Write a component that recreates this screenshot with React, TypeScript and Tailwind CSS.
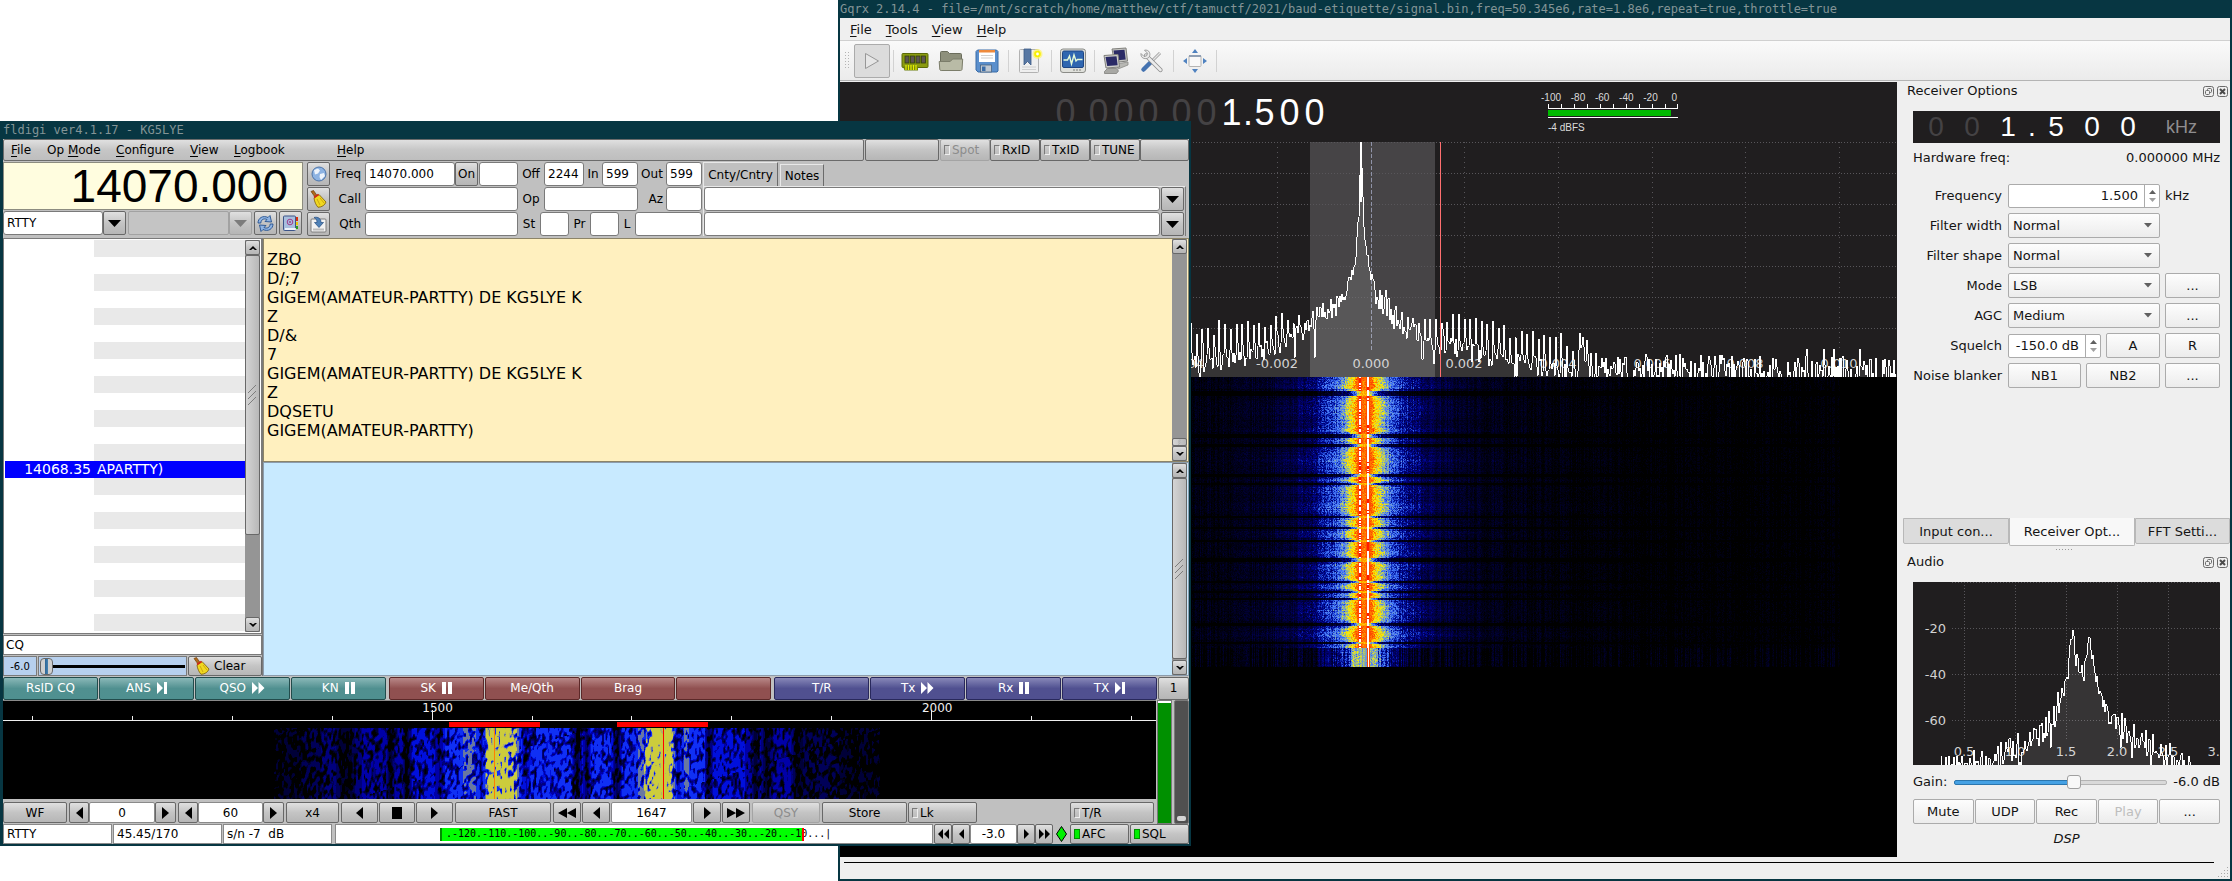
import React, { useMemo } from "react";

/* ------------------------------------------------------------------ */
/* Signal data                                                         */
/* ------------------------------------------------------------------ */

function makeRandom(seed: number) {
  let a = seed;
  return () => {
    a = (a + 0x6d2b79f5) | 0;
    let t = Math.imul(a ^ (a >>> 15), 1 | a);
    t = (t + Math.imul(t ^ (t >>> 7), 61 | t)) ^ t;
    return ((t ^ (t >>> 14)) >>> 0) / 4294967296;
  };
}

type Point = [number, number];

function interpolate(points: Point[], x: number): number {
  if (x <= points[0][0]) return points[0][1];
  for (let i = 1; i < points.length; i++) {
    if (x <= points[i][0]) {
      const [x0, y0] = points[i - 1];
      const [x1, y1] = points[i];
      return y0 + ((y1 - y0) * (x - x0)) / (x1 - x0);
    }
  }
  return points[points.length - 1][1];
}

function rasterize(
  x0: number,
  x1: number,
  y0: number,
  y1: number,
  colors: string[],
  pick: (x: number, y: number) => number,
) {
  const parts: string[][] = colors.map(() => []);
  for (let y = y0; y < y1; y++) {
    let start = x0;
    let current = pick(x0, y);
    for (let x = x0 + 1; x <= x1; x++) {
      const next = x < x1 ? pick(x, y) : -1;
      if (next !== current) {
        if (current > 0) parts[current].push(`M${start} ${y}h${x - start}v1h${start - x}z`);
        start = x;
        current = next;
      }
    }
  }
  return parts.map((p) => p.join(""));
}

function Raster({ colors, paths }: { colors: string[]; paths: string[] }) {
  return (
    <g shapeRendering="crispEdges">
      {paths.map((d, i) => (d ? <path key={i} d={d} fill={colors[i]} /> : null))}
    </g>
  );
}

/* ------------------------------------------------------------------ */
/* Gqrx: spectrum and waterfall                                        */
/* ------------------------------------------------------------------ */

const PEAKS: Point[] = [
  [340, 178], [405, 176], [440, 168], [465, 172], [480, 158], [495, 154], [505, 142], [513, 118],
  [516, 96], [519, 50], [521, 0], [523, 60], [525, 100], [529, 108], [533, 136], [540, 146], [545, 150],
  [552, 158], [560, 168], [580, 172], [600, 168], [625, 164], [650, 172], [680, 186], [710, 186],
  [732, 192], [746, 208], [770, 218], [800, 214], [1057, 218],
];
const TROUGHS: Point[] = [
  [340, 226], [405, 218], [440, 204], [465, 190], [485, 180], [498, 172], [508, 156], [515, 132],
  [519, 96], [521, 0], [524, 84], [528, 130], [535, 158], [548, 178], [560, 186], [580, 196], [600, 204],
  [640, 216], [680, 222], [720, 232], [760, 240], [1057, 246],
];

function spectrumPath() {
  const rnd = makeRandom(42);
  const out: string[] = [];
  for (let x = 330; x < 1057; x++) {
    const hi = interpolate(PEAKS, x);
    const lo = interpolate(TROUGHS, x);
    const inComb = x < 470 || (x > 555 && x < 740);
    let y: number;
    if (inComb) {
      const phase = (x + 3) % 5.7;
      if (phase < 1) y = hi + rnd() * 16;
      else if (phase < 2) y = (hi + lo) / 2 + rnd() * 14;
      else y = lo + (rnd() - 0.6) * 20;
      if (rnd() < 0.02) y = lo + 20;
    } else if (x > 505 && x < 535) {
      y = (hi + lo) / 2 + (rnd() - 0.5) * 14;
    } else if (x > 735) {
      y = lo + (hi - lo) * Math.pow(rnd(), 1.3) * 1.1;
      if (rnd() < 0.04) y = hi - 10;
    } else {
      y = lo + (hi - lo) * rnd() + (rnd() - 0.5) * 14;
    }
    if (x === 521) y = 0;
    if (x === 475) y = 216;
    out.push(`${x} ${Math.round(Math.min(235, Math.max(0, y)))}`);
  }
  return out.join("L");
}

const HOT = [
  "#000000", "#00000c", "#000016", "#000024", "#000034", "#000048", "#00005c", "#000074", "#00088c",
  "#0c20ac", "#2044cc", "#3868f0", "#5080f4", "#6c98d8", "#8cb09c", "#b4c86c", "#dce030", "#f8ec00",
  "#ffc800", "#ff9c00", "#ff7400", "#ff4c00", "#ff1c00", "#ffffff",
];

const LEVELS: Point[] = [
  [0, 20], [7, 20.5], [9, 19], [11, 17.5], [15, 16.5], [19, 14], [23, 12], [30, 10.5], [38, 8.6], [52, 6.8],
  [70, 4.8], [95, 3], [130, 1.9], [190, 1.1], [260, 0.4], [330, 0],
];

const GAPS: [number, number][] = [
  [14, 18], [57, 60], [67, 69], [97, 99], [106, 107], [139, 140], [150, 151],
  [163, 164], [181, 184], [204, 205], [214, 215], [221, 222], [246, 248], [265, 266],
];

function gqrxWaterfall() {
  const rnd = makeRandom(7);
  const columns = Array.from({ length: 1057 }, () => rnd());
  const rows = Array.from({ length: 290 }, (_, y) => {
    const gap = GAPS.find(([a, b]) => y >= a && y <= b);
    const near = GAPS.find(([a, b]) => y >= a - 2 && y <= b + 2);
    const tail = y >= 271;
    const base = tail ? 0.55 : gap ? 0.42 : near ? 0.82 : 1 + 0.08 * Math.sin(y / 4);
    return {
      scale: base * (0.9 + rnd() * 0.2),
      gap: !!gap,
      tail,
      left: rnd() < 0.6,
      right: Math.sin(y / 6 + 2) > -0.3 || rnd() < 0.3,
    };
  });
  return rasterize(352, 1000, 0, 290, HOT, (x, y) => {
    const row = rows[y];
    if (row.tail && x === 528) return 23;
    if (row.tail && (x === 527 || x === 529)) return 21;
    if ((x === 519 || x === 520) && !row.tail && !row.gap) return row.left ? 23 : 22;
    if (x === 527 || x === 528) return row.right || row.gap ? 23 : 22;
    if ((x === 526 || x === 518 || x === 521 || x === 529) && !row.gap && !row.tail) return 21;
    const d = Math.abs(x - 524) / row.scale;
    let level = interpolate(LEVELS, d);
    if (row.tail) level = Math.min(level, 13.5) + (columns[x] - 0.5) * 3;
    if (row.gap) level -= 1.5;
    if (d > 18) level += (columns[x] - 0.5) * 2.4;
    level += (rnd() - 0.5) * (d < 8 ? 1.6 : d < 60 ? 4.2 : 2.4);
    return Math.max(0, Math.min(22, Math.round(level)));
  });
}

function SpectrumView() {
  const line = useMemo(spectrumPath, []);
  const paths = useMemo(gqrxWaterfall, []);
  const xs = [437, 531, 624, 718, 812, 905, 999];
  const labels = ["-0.002", "0.000", "0.002", "0.004", "0.006", "0.008", "0.010"];
  return (
    <svg viewBox="0 0 1057 525" preserveAspectRatio="none" className="block h-[525px] w-full" role="img" aria-label="Spectrum and waterfall">
      <rect width="1057" height="235" fill="#201e1f" />
      <rect x="470" y="0" width="125" height="235" fill="#464446" />
      <g stroke="#58565a" strokeWidth="1" strokeDasharray="1 2" shapeRendering="crispEdges">
        {[0, 31, 62, 93, 124, 155, 186].map((y) => (
          <line key={y} x1="350" x2="1057" y1={y + 0.5} y2={y + 0.5} />
        ))}
        {xs.map((x) => (
          <line key={x} x1={x + 0.5} x2={x + 0.5} y1="0" y2="209" strokeDasharray="1 4" />
        ))}
      </g>
      <line x1="531.5" x2="531.5" y1="0" y2="209" stroke="#8f93a8" strokeDasharray="4 2" shapeRendering="crispEdges" />
      <g fill="#cfcfcf" fontSize="13" textAnchor="middle" fontFamily="DejaVu Sans">
        <text x="343" y="226">-0.004</text>
        {xs.map((x, i) => (
          <text key={x} x={x} y="226">
            {labels[i]}
          </text>
        ))}
      </g>
      <path d={`M330 235L${line}L1057 235z`} fill="#ffffff" fillOpacity="0.1" />
      <path d={`M${line}`} fill="none" stroke="#ffffff" strokeWidth="1" strokeLinejoin="bevel" shapeRendering="crispEdges" />
      <line x1="521" x2="521" y1="0" y2="60" stroke="#ffffff" strokeWidth="2" />
      <line x1="600.5" x2="600.5" y1="0" y2="235" stroke="#ff6f6f" strokeWidth="1" shapeRendering="crispEdges" />
      <rect y="235" width="1057" height="290" fill="#000000" />
      <g transform="translate(0 235)">
        <Raster colors={HOT} paths={paths} />
      </g>
    </svg>
  );
}

const AUDIO: Point[] = [
  [25, 184], [55, 180], [80, 173], [95, 166], [110, 159], [122, 148], [132, 140], [140, 136], [143, 120],
  [147, 113], [152, 100], [155, 84], [158, 54], [160, 52], [162, 66], [165, 82], [169, 90], [172, 84], [175, 58],
  [178, 55], [180, 74], [183, 96], [188, 110], [193, 124], [200, 132], [208, 140], [220, 147], [235, 158],
  [250, 168], [265, 176], [285, 184],
];

function AudioPlot() {
  const line = useMemo(() => {
    const rnd = makeRandom(19);
    const out: string[] = [];
    for (let x = 28; x < 284; x++) {
      const center = Math.abs(x - 168) < 20;
      const base = interpolate(AUDIO, x);
      const y = base + (x % 4 < 2 ? -3 : 6) + (rnd() - 0.35) * (center ? 12 : 22) + (rnd() < 0.05 && !center ? 16 : 0);
      out.push(`${x} ${Math.round(Math.min(183, y))}`);
    }
    return out.join("L");
  }, []);
  return (
    <svg viewBox="0 0 307 183" preserveAspectRatio="none" className="block h-[183px] w-full bg-[#201e1f]" role="img" aria-label="Audio spectrum">
      <g stroke="#58565a" strokeDasharray="1 2" shapeRendering="crispEdges">
        {[0.5, 46.5, 92.5, 138.5].map((y) => (
          <line key={y} x1="39" x2="307" y1={y} y2={y} />
        ))}
        {[51.5, 102.5, 153.5, 204.5, 255.5].map((x) => (
          <line key={x} x1={x} x2={x} y1="0" y2="158" />
        ))}
      </g>
      <g fill="#d2d2d2" fontSize="13" fontFamily="DejaVu Sans">
        <text x="33" y="51" textAnchor="end">-20</text>
        <text x="33" y="97" textAnchor="end">-40</text>
        <text x="33" y="143" textAnchor="end">-60</text>
        <text x="51" y="174" textAnchor="middle">0.5</text>
        <text x="102" y="174" textAnchor="middle">1.0</text>
        <text x="153" y="174" textAnchor="middle">1.5</text>
        <text x="204" y="174" textAnchor="middle">2.0</text>
        <text x="255" y="174" textAnchor="middle">2.5</text>
        <text x="307" y="174" textAnchor="end">3.</text>
      </g>
      <path d={`M28 183L${line}L284 183z`} fill="#ffffff" fillOpacity="0.1" />
      <path d={`M${line}`} fill="none" stroke="#ffffff" strokeWidth="1" strokeLinejoin="bevel" shapeRendering="crispEdges" />
    </svg>
  );
}

/* ------------------------------------------------------------------ */
/* Fldigi waterfall                                                    */
/* ------------------------------------------------------------------ */

const DIGI = ["#000000", "#00001c", "#000038", "#000058", "#00007c", "#0000a8", "#0010dc", "#1030f4", "#6a78a0", "#b0b068", "#cccc3c"];

const DIGI_PROFILE: Point[] = [
  [225, 0], [270, 0.02], [278, 0.14], [295, 0.14], [300, 0.22], [312, 0.22], [320, 0.34], [332, 0.32], [338, 0.14],
  [347, 0.14], [354, 0.4], [368, 0.46], [383, 0.44], [387, 0.1], [393, 0.5], [399, 0.46], [403, 0.08], [409, 0.54],
  [430, 0.56], [436, 0.4], [442, 0.6], [450, 0.66], [460, 0.72], [468, 0.76], [475, 0.7], [478, 0.5], [482, 0.78], [486, 1.1],
  [502, 1.02], [508, 0.9], [513, 0.84], [516, 0.66], [523, 0.5], [530, 0.68], [550, 0.68], [568, 0.62], [574, 0.2],
  [580, 0.54], [584, 0.3], [590, 0.68], [608, 0.66], [615, 0.22], [620, 0.64], [634, 0.7], [640, 0.8], [646, 0.88],
  [652, 1.04], [668, 1.14], [671, 0.8], [675, 0.54], [682, 0.74], [695, 0.68], [702, 0.62], [706, 0.2], [711, 0.54],
  [730, 0.56], [748, 0.5], [753, 0.12], [758, 0.46], [764, 0.12], [772, 0.48], [788, 0.46], [794, 0.1], [806, 0.28],
  [830, 0.24], [845, 0.14], [870, 0.1], [880, 0],
];

function digiWaterfall() {
  const rnd = makeRandom(91);
  const cols = 480;
  const rows = 24;
  const grid = Array.from({ length: rows }, () => Array.from({ length: cols }, () => rnd()));
  const smooth = (x: number, y: number) => {
    const gx = x / 1.9;
    const gy = ((y + x * 0.3) % 88) / 3.8;
    const ix = Math.floor(gx);
    const iy = Math.floor(gy);
    const fx = gx - ix;
    const fy = gy - iy;
    const a = grid[iy % rows][ix % cols] * (1 - fx) + grid[iy % rows][(ix + 1) % cols] * fx;
    const b = grid[(iy + 1) % rows][ix % cols] * (1 - fx) + grid[(iy + 1) % rows][(ix + 1) % cols] * fx;
    return a * (1 - fy) + b * fy;
  };
  return rasterize(225, 885, 0, 71, DIGI, (x, y) => {
    const p = interpolate(DIGI_PROFILE, x);
    const n = smooth(x, y);
    const v = p * 12 + (n - 0.5) * 12 - 1.6;
    const cap = p < 0.2 ? 2 : p < 0.3 ? 3 : p < 0.42 ? 4 : p < 0.52 ? 5 : p < 0.6 ? 6 : p < 0.72 ? 7 : p < 0.82 ? 8 : 10;
    if (p < 0.03) return 0;
    return Math.max(0, Math.min(cap, Math.round(v)));
  });
}

function DigiWaterfall() {
  const paths = useMemo(digiWaterfall, []);
  const ticks = [29, 129, 229, 329, 429, 529, 629, 729, 829, 929, 1029, 1129];
  return (
    <svg viewBox="0 0 1154 98" preserveAspectRatio="none" className="block h-[98px] w-full bg-black" role="img" aria-label="Waterfall">
      <g shapeRendering="crispEdges">
        <rect y="19" width="1154" height="1" fill="#f0f0f0" />
        {ticks.map((x) => (
          <rect key={x} x={x} y={x === 429 || x === 929 ? 9 : 15} width="1" height={x === 429 || x === 929 ? 10 : 4} fill="#f0f0f0" />
        ))}
      </g>
      <g fill="#f2f2f2" fontSize="12" textAnchor="middle" fontFamily="DejaVu Sans">
        <text x="435" y="11">1500</text>
        <text x="935" y="11">2000</text>
      </g>
      <g transform="translate(0 27)">
        <Raster colors={DIGI} paths={paths} />
      </g>
      <g shapeRendering="crispEdges" fill="#ff0000">
        <rect x="446" y="21" width="91" height="5" />
        <rect x="615" y="21" width="91" height="5" />
        <rect x="661" y="27" width="1" height="71" />
        <rect x="491" y="27" width="1" height="71" fill="#ff8000" />
      </g>
    </svg>
  );
}

/* ------------------------------------------------------------------ */
/* Gqrx window                                                         */
/* ------------------------------------------------------------------ */

function MenuItem({ label, hot = 0 }: { label: string; hot?: number }) {
  return (
    <button type="button" className="leading-none whitespace-pre">
      {label.slice(0, hot)}
      <u className="underline-offset-2">{label[hot]}</u>
      {label.slice(hot + 1)}
    </button>
  );
}

const toolButton = "flex h-9 w-9 items-center justify-center";

function ToolSeparator() {
  return <span className="mx-[3px] h-[22px] w-px bg-[#d2d2d2]" />;
}

function Toolbar() {
  return (
    <div className="flex h-[41px] items-center border-y border-t-[#d0d0d0] border-b-[#b4b4b4] bg-linear-to-b from-[#fafafa] to-[#ebebeb] pl-1">
      <svg width="10" height="18" viewBox="0 0 10 18" aria-hidden="true">
        <g fill="#b4b4b4">
          {[0, 3, 6, 9, 12, 15].map((y) => (
            <g key={y}>
              <rect x="1" y={y} width="1" height="1" />
              <rect x="4" y={y} width="1" height="1" />
            </g>
          ))}
        </g>
      </svg>
      <button type="button" aria-label="Start DSP" className="flex h-[34px] w-9 items-center justify-center rounded-[2px] border border-[#ababab] bg-[#dcdcdc]">
        <svg width="16" height="18" viewBox="0 0 16 18">
          <path d="M1.5 1.5v15L14.5 9z" fill="#e6e6e6" stroke="#979797" />
        </svg>
      </button>
      <ToolSeparator />
      <button type="button" aria-label="Configure I/O devices" className={toolButton}>
        <svg width="28" height="24" viewBox="0 0 28 24">
          <rect x="1" y="4.500" width="26" height="14" rx="1" fill="#8a9a10" stroke="#5a6a08" />
          <path d="M2 17.500h15v4H3.500z" fill="#6f8010" />
          <path d="M5 16v5M7.500 16v5M10 16v5M12.500 16v5M15 16v5" stroke="#e8f000" strokeWidth="1.200" />
          <g fill="#5d5550" stroke="#34400a" strokeWidth="0.800">
            <rect x="4" y="7" width="4" height="7" />
            <rect x="9.500" y="7" width="4" height="7" />
            <rect x="15" y="7" width="4" height="7" />
            <rect x="20.500" y="7" width="4" height="7" />
          </g>
        </svg>
      </button>
      <button type="button" aria-label="Load settings" className={toolButton}>
        <svg width="26" height="24" viewBox="0 0 26 24">
          <path d="M2.500 21V3.500a1 1 0 0 1 1-1h6l2 2h11a1 1 0 0 1 1 1V18z" fill="#8e907c" stroke="#6b6d5c" />
          <path d="M1.200 12.500h11l2.500-2.500h10l-.7 10.500a1.500 1.500 0 0 1-1.500 1H3.300a1.500 1.500 0 0 1-1.500-1z" fill="#b9bba6" stroke="#7b7d6a" />
        </svg>
      </button>
      <button type="button" aria-label="Save settings" className={toolButton}>
        <svg width="24" height="24" viewBox="0 0 24 24">
          <path d="M2.500 1h19l1.500 1.500V22l-1 1H3l-2-2V2.500z" fill="#5b8fcc" stroke="#3a6ca8" />
          <rect x="4" y="1" width="16" height="12" fill="#ffffff" />
          <rect x="4" y="1" width="16" height="2.500" fill="#ee8a3c" />
          <path d="M6 6.500h12M6 9h12" stroke="#cfcfcf" />
          <rect x="5.500" y="16" width="11" height="7" fill="#bfc8d2" stroke="#47627f" strokeWidth="0.800" />
          <rect x="7" y="17.500" width="3.500" height="4.500" fill="#3a6ca8" />
        </svg>
      </button>
      <ToolSeparator />
      <button type="button" aria-label="Add bookmark" className={toolButton}>
        <svg width="26" height="26" viewBox="0 0 26 26">
          <rect x="2.500" y="1.500" width="19" height="23" rx="1" fill="#efefef" stroke="#b2b2b2" />
          <path d="M5 19h14M5 21.500h14" stroke="#d0d0d0" />
          <path d="M7 1h7v16l-3.500-3.500L7 17z" fill="#5878a4" stroke="#3d5a86" strokeWidth="0.800" />
          <circle cx="20.500" cy="6" r="5" fill="#fff46a" opacity="0.7" />
          <circle cx="20.500" cy="6" r="3.300" fill="#f7f000" />
          <circle cx="20.500" cy="6" r="1.400" fill="#ffffff" />
        </svg>
      </button>
      <ToolSeparator />
      <button type="button" aria-label="Spectrum display" className={toolButton}>
        <svg width="28" height="26" viewBox="0 0 28 26">
          <rect x="1.500" y="1" width="25" height="23.500" rx="2.500" fill="#dfe0db" stroke="#8b8c88" />
          <rect x="3.500" y="3" width="21" height="16.500" rx="1.500" fill="#2f66b0" stroke="#1e4684" />
          <path d="M4.500 12h4l2-4 2 8 2.500-9 2 6 1.500-1.500h5" fill="none" stroke="#e6fbd8" strokeWidth="1.400" />
          <path d="M14 22h9" stroke="#a0a09c" strokeWidth="1.500" strokeDasharray="2 1" />
        </svg>
      </button>
      <ToolSeparator />
      <button type="button" aria-label="Remote control" className={toolButton}>
        <svg width="28" height="28" viewBox="0 0 28 28">
          <path d="M10 2l14-1 1.500 13-13 1.500z" fill="#c4c4c0" stroke="#80807c" />
          <path d="M11.500 3.500l11-.8 1.200 9.800-10.500 1z" fill="#2a2a66" />
          <path d="M14 17l12-2v3l-10 4z" fill="#b8b8b4" stroke="#8a8a86" strokeWidth="0.800" />
          <path d="M2 8.500l14-1 1.500 12.500-13.500 1z" fill="#d2d2ce" stroke="#80807c" />
          <path d="M3.500 10l11-.8 1.200 9-10.500.8z" fill="#2a2a66" />
          <path d="M2.500 24.500l3-3h9l2 2.500-2 2.500h-12z" fill="#a8a8a4" stroke="#80807c" strokeWidth="0.800" />
        </svg>
      </button>
      <button type="button" aria-label="Remote settings" className={toolButton}>
        <svg width="24" height="24" viewBox="0 0 24 24">
          <path d="M3 21L20 4" stroke="#9c9c9c" strokeWidth="3" />
          <path d="M3 21L20 4" stroke="#e4e4e4" strokeWidth="1.400" />
          <path d="M3.500 20.500l8-8" stroke="#4472b0" strokeWidth="4.500" strokeLinecap="round" />
          <path d="M6 6.500L20.500 21" stroke="#8c8c8c" strokeWidth="4.200" strokeLinecap="round" />
          <path d="M6 6.500L20.500 21" stroke="#ececec" strokeWidth="2.600" strokeLinecap="round" />
          <path d="M4.500 1.200l3 3-.8 2.600-2.700.7-3-3C.6 8 3 10 6.500 9.500 9.500 9 10.500 6 9.500 3.500 8.700 1.500 6.500.7 4.500 1.200z" fill="#ececec" stroke="#8c8c8c" strokeWidth="0.800" />
        </svg>
      </button>
      <ToolSeparator />
      <button type="button" aria-label="Full screen" className={toolButton}>
        <svg width="26" height="26" viewBox="0 0 26 26">
          <rect x="7" y="7.500" width="12" height="11" rx="1" fill="#f8f8f8" stroke="#b4b4b4" />
          <rect x="7" y="7" width="12" height="2" fill="#8f9fb4" />
          <path d="M13 1l3 4h-6zM13 25l3-4h-6zM1 13l4-3v6zM25 13l-4-3v6z" fill="#4f82c0" />
        </svg>
      </button>
      <ToolSeparator />
    </div>
  );
}

function SignalMeter() {
  return (
    <div className="w-[150px] font-['Liberation_Sans',sans-serif] text-[10px] leading-none text-[#dcdcdc]">
      <div className="flex justify-between pr-[14px]">
        <span>-100</span>
        <span>-80</span>
        <span>-60</span>
        <span>-40</span>
        <span>-20</span>
        <span className="pl-1">0</span>
      </div>
      <svg width="140" height="16" viewBox="0 0 140 16" className="block" role="img" aria-label="Signal level">
        <g shapeRendering="crispEdges">
          {[7, 20, 33, 46, 59, 72, 85, 98, 111, 124, 136].map((x) => (
            <rect key={x} x={x} y="1" width="1" height="5" fill="#fff" />
          ))}
          <rect x="7" y="5" width="130" height="1" fill="#fff" />
          <rect x="7" y="7" width="123" height="6" fill="#00bb00" />
          <rect x="7" y="14" width="130" height="1" fill="#fff" />
        </g>
      </svg>
      <div className="mt-1 pl-[7px]">-4 dBFS</div>
    </div>
  );
}

function FrequencyHeader() {
  const digits: [string, string][] = [
    ["0", "w-[25px] text-[#444244]"],
    [" ", "w-2"],
    ["0", "w-[25px] text-[#444244]"],
    ["0", "w-[25px] text-[#444244]"],
    ["0", "w-[25px] text-[#444244]"],
    [" ", "w-2"],
    ["0", "w-[25px] text-[#444244]"],
    ["0", "w-[25px] text-[#444244]"],
    ["1", "w-[25px] text-white"],
    [".", "w-2 text-white"],
    ["5", "w-[25px] text-white"],
    ["0", "w-[25px] text-white"],
    ["0", "w-[25px] text-white"],
  ];
  return (
    <div className="flex h-[60px] items-center bg-[#201e1f] pt-0.5">
      <div className="ml-[213px] flex font-['Liberation_Sans',sans-serif] text-4xl leading-none">
        {digits.map(([d, cls], i) => (
          <span key={i} className={`flex justify-center ${cls}`}>
            {d}
          </span>
        ))}
      </div>
      <div className="ml-[214px]">
        <SignalMeter />
      </div>
    </div>
  );
}

function DockTitle({ title }: { title: string }) {
  return (
    <div className="flex items-center justify-between pr-0.5 pl-[10px] leading-[18px]">
      <h2>{title}</h2>
      <div className="flex gap-[3px]">
        <button type="button" aria-label={`Float ${title}`} className="h-[11px] w-[11px]">
          <svg width="11" height="11" viewBox="0 0 11 11" fill="none" stroke="#6a6a6a">
            <rect x="0.500" y="0.500" width="10" height="10" rx="2" />
            <rect x="4.500" y="2.500" width="4" height="4" rx="1" />
            <rect x="2.500" y="4.500" width="4" height="4" rx="1" fill="#efefef" />
          </svg>
        </button>
        <button type="button" aria-label={`Close ${title}`} className="h-[11px] w-[11px]">
          <svg width="11" height="11" viewBox="0 0 11 11" fill="none" stroke="#6a6a6a">
            <rect x="0.500" y="0.500" width="10" height="10" rx="2" />
            <path d="M3 3l5 5M8 3l-5 5" stroke="#4a4a4a" strokeWidth="2" />
          </svg>
        </button>
      </div>
    </div>
  );
}

const qtButton =
  "h-[25px] rounded-[2px] border border-[#ababab] bg-linear-to-b from-[#fdfdfd] to-[#ececec] text-center leading-none";

function QtSelect({ id, options }: { id: string; options: string[] }) {
  return (
    <div className="relative w-[152px]">
      <select id={id} className="h-[25px] w-full appearance-none rounded-[2px] border border-[#ababab] bg-linear-to-b from-[#fdfdfd] to-[#ececec] pl-1 leading-none">
        {options.map((o) => (
          <option key={o}>{o}</option>
        ))}
      </select>
      <svg width="8" height="5" viewBox="0 0 8 5" className="pointer-events-none absolute top-[10px] right-2" aria-hidden="true">
        <path d="M0 0h8L4 4.500z" fill="#606060" />
      </svg>
    </div>
  );
}

function SpinButtons() {
  return (
    <span className="flex w-[15px] flex-col items-center justify-center gap-1 border-l border-[#ababab]">
      <svg width="7" height="4" viewBox="0 0 7 4" aria-hidden="true">
        <path d="M0 4h7L3.500 0z" fill="#606060" />
      </svg>
      <svg width="7" height="4" viewBox="0 0 7 4" aria-hidden="true">
        <path d="M0 0h7L3.500 4z" fill="#a0a0a0" />
      </svg>
    </span>
  );
}

function FormRow({ label, htmlFor, children }: { label: string; htmlFor: string; children: React.ReactNode }) {
  return (
    <div className="flex h-[25px] items-center">
      <label htmlFor={htmlFor} className="w-[90px] pr-px text-right">
        {label}
      </label>
      <div className="ml-[5px] flex flex-1 items-center gap-[5px]">{children}</div>
    </div>
  );
}

function ReceiverOptions() {
  return (
    <section className="flex h-[436px] flex-col">
      <DockTitle title="Receiver Options" />
      <div className="mx-[10px] ml-4 pt-[11px]">
        <div className="flex h-8 items-center bg-[#201e1f] pl-[5px] font-['Liberation_Sans',sans-serif] text-[28px] leading-none text-white">
          <span className="w-9 text-center text-[#444244]">0</span>
          <span className="w-9 text-center text-[#444244]">0</span>
          <span className="w-9 text-center">1</span>
          <span className="w-3 text-center">.</span>
          <span className="w-9 text-center">5</span>
          <span className="w-9 text-center">0</span>
          <span className="w-9 text-center">0</span>
          <span className="ml-5 text-lg leading-none text-[#8f8d8f]">kHz</span>
        </div>
        <div className="mt-[6px] flex justify-between leading-[18px]">
          <span>Hardware freq:</span>
          <span>0.000000 MHz</span>
        </div>
        <div className="mt-4 flex flex-col gap-[5px]">
          <FormRow label="Frequency" htmlFor="rx-frequency">
            <div className="flex h-6 w-[152px] rounded-[2px] border border-[#ababab] bg-white">
              <input id="rx-frequency" defaultValue="1.500" className="w-0 flex-1 pr-[6px] text-right outline-none" />
              <SpinButtons />
            </div>
            <span>kHz</span>
          </FormRow>
          <FormRow label="Filter width" htmlFor="rx-width">
            <QtSelect id="rx-width" options={["Normal"]} />
          </FormRow>
          <FormRow label="Filter shape" htmlFor="rx-shape">
            <QtSelect id="rx-shape" options={["Normal"]} />
          </FormRow>
          <FormRow label="Mode" htmlFor="rx-mode">
            <QtSelect id="rx-mode" options={["LSB"]} />
            <button type="button" aria-label="Mode options" className={`${qtButton} flex-1`}>...</button>
          </FormRow>
          <FormRow label="AGC" htmlFor="rx-agc">
            <QtSelect id="rx-agc" options={["Medium"]} />
            <button type="button" aria-label="AGC options" className={`${qtButton} flex-1`}>...</button>
          </FormRow>
          <FormRow label="Squelch" htmlFor="rx-squelch">
            <div className="flex h-6 w-[93px] rounded-[2px] border border-[#ababab] bg-white">
              <input id="rx-squelch" defaultValue="-150.0 dB" className="w-0 flex-1 pr-[6px] text-right outline-none" />
              <SpinButtons />
            </div>
            <button type="button" className={`${qtButton} w-[54px]`}>A</button>
            <button type="button" className={`${qtButton} flex-1`}>R</button>
          </FormRow>
          <FormRow label="Noise blanker" htmlFor="rx-nb1">
            <button type="button" id="rx-nb1" className={`${qtButton} w-[73px]`}>NB1</button>
            <button type="button" className={`${qtButton} w-[74px]`}>NB2</button>
            <button type="button" aria-label="Noise blanker options" className={`${qtButton} flex-1`}>...</button>
          </FormRow>
        </div>
      </div>
    </section>
  );
}

function SidePanel() {
  return (
    <aside className="flex w-[333px] shrink-0 flex-col text-[13px] text-[#141414]">
      <ReceiverOptions />
      <div className="flex h-7 items-start pl-[6px]" role="tablist">
        <button type="button" role="tab" className="h-[26px] w-[106px] rounded-b-[2px] border border-[#b8b8b8] bg-[#dcdcdc] leading-none">Input con...</button>
        <button type="button" role="tab" aria-selected="true" className="h-7 w-[126px] rounded-b-[2px] border border-t-0 border-[#b8b8b8] bg-[#f8f8f8] leading-none">Receiver Opt...</button>
        <button type="button" role="tab" className="h-[26px] flex-1 rounded-b-[2px] border border-[#b8b8b8] bg-[#dcdcdc] leading-none">FFT Setti...</button>
      </div>
      <div className="flex h-[7px] items-center justify-center gap-0.5">
        {[0, 1, 2, 3, 4, 5].map((i) => (
          <span key={i} className="h-px w-px bg-[#9a9a9a]" />
        ))}
      </div>
      <section>
        <DockTitle title="Audio" />
        <div className="mr-[10px] ml-4 pt-[11px]">
          <AudioPlot />
          <div className="mt-[5px] flex h-6 items-center">
            <label htmlFor="gain" className="w-[41px]">Gain:</label>
            <div className="relative h-4 flex-1">
              <div className="flex h-full items-center">
                <div className="h-[5px] w-[56%] rounded-[2px] border border-[#2b76ae] bg-[#45a1e4]" />
                <div className="h-[5px] flex-1 rounded-[2px] border border-[#b4b4b4] bg-[#d9d9d9]" />
              </div>
              <input
                id="gain"
                type="range"
                min={-80}
                max={50}
                defaultValue={-6}
                className="absolute inset-0 h-4 w-full appearance-none bg-transparent [&::-webkit-slider-thumb]:h-[14px] [&::-webkit-slider-thumb]:w-[14px] [&::-webkit-slider-thumb]:appearance-none [&::-webkit-slider-thumb]:rounded-[3px] [&::-webkit-slider-thumb]:border [&::-webkit-slider-thumb]:border-[#a0a0a0] [&::-webkit-slider-thumb]:bg-[#f8f8f8]"
              />
            </div>
            <span className="ml-[6px]">-6.0 dB</span>
          </div>
          <div className="mt-[5px] flex gap-px">
            <button type="button" className={`${qtButton} flex-1`}>Mute</button>
            <button type="button" className={`${qtButton} flex-1`}>UDP</button>
            <button type="button" className={`${qtButton} flex-1`}>Rec</button>
            <button type="button" disabled className={`${qtButton} flex-1 text-[#bebebe]`}>Play</button>
            <button type="button" aria-label="Audio options" className={`${qtButton} flex-1`}>...</button>
          </div>
          <div className="mt-[6px] text-center leading-[18px] italic">DSP</div>
        </div>
      </section>
    </aside>
  );
}

function GqrxWindow() {
  return (
    <div className="absolute inset-y-0 right-0 left-[838px] flex flex-col border-r-2 border-b-2 border-l-2 border-[#073642] bg-[#efefef] font-['DejaVu_Sans',sans-serif]">
      <div className="h-[18px] overflow-hidden bg-[#073642] font-['DejaVu_Sans_Mono',monospace] text-xs leading-[18px] whitespace-nowrap text-[#839496]">
        Gqrx 2.14.4 - file=/mnt/scratch/home/matthew/ctf/tamuctf/2021/baud-etiquette/signal.bin,freq=50.345e6,rate=1.8e6,repeat=true,throttle=true
      </div>
      <nav className="flex h-[22px] items-center gap-[14px] pl-[10px] text-[13px] text-[#141414]">
        <MenuItem label="File" />
        <MenuItem label="Tools" />
        <MenuItem label="View" />
        <MenuItem label="Help" />
      </nav>
      <Toolbar />
      <div className="flex flex-1 pt-px">
        <main className="mb-[22px] flex min-w-0 flex-1 flex-col bg-black">
          <FrequencyHeader />
          <SpectrumView />
        </main>
        <SidePanel />
      </div>
      <div className="absolute right-4 bottom-4 left-1 h-px bg-black" />
      <svg width="11" height="11" viewBox="0 0 11 11" className="absolute right-px bottom-px" aria-hidden="true">
        <g fill="#a8a8a8">
          {[[9, 0], [6, 3], [9, 3], [3, 6], [6, 6], [9, 6], [0, 9], [3, 9], [6, 9], [9, 9]].map(([x, y]) => (
            <rect key={`${x}-${y}`} x={x} y={y} width="1" height="1" />
          ))}
        </g>
      </svg>
    </div>
  );
}

/* ------------------------------------------------------------------ */
/* Fldigi window                                                       */
/* ------------------------------------------------------------------ */

const flButton =
  "flex items-center justify-center rounded-[2px] border border-[#686868] bg-linear-to-b from-[#e0e0e0] via-[#c4c4c4] to-[#b6b6b6] leading-none";
const flInput = "h-6 min-w-0 rounded-[3px] border border-[#7a7a7a] bg-white px-[3px] leading-none outline-none";

function Broom() {
  return (
    <svg width="17" height="18" viewBox="0 0 17 18" aria-hidden="true">
      <path d="M1 1.500L3.500 0.500 7 5.500 5 7z" fill="#b06a1c" stroke="#6e3c08" strokeWidth="0.700" />
      <path d="M4 8l5-3.500 7 7.500c-1 3-4 5.200-8 5.300C6 15 4.500 12 4 8z" fill="#f0d820" stroke="#7c5c08" strokeWidth="0.800" />
      <path d="M4 7.500l4.500-3" stroke="#d02a14" strokeWidth="1.800" />
      <path d="M7 9l3 6M10 8l4 5" stroke="#c8a010" strokeWidth="0.900" />
    </svg>
  );
}

type GlyphName = "left" | "right" | "left2" | "right2" | "stop" | "down" | "skip" | "ffwd" | "pause" | "upSmall" | "downSmall";

function Glyph({ name }: { name: GlyphName }) {
  const shapes: Record<GlyphName, { w: number; h: number; d: string }> = {
    left: { w: 7, h: 12, d: "M7 0v12L0 6z" },
    right: { w: 7, h: 12, d: "M0 0v12l7-6z" },
    left2: { w: 18, h: 10, d: "M9 0v10L0 5zM18 0v10L9 5z" },
    right2: { w: 18, h: 10, d: "M0 0v10l9-5zM9 0v10l9-5z" },
    stop: { w: 10, h: 12, d: "M0 0h10v12H0z" },
    down: { w: 13, h: 7, d: "M0 0h13L6.500 7z" },
    skip: { w: 10, h: 12, d: "M0 0v12l6-6zM7 0h3v12H7z" },
    ffwd: { w: 13, h: 12, d: "M0 0v12l6-6zM6.500 0v12l6-6z" },
    pause: { w: 10, h: 12, d: "M0 0h4v12H0zM6 0h4v12H6z" },
    upSmall: { w: 8, h: 4, d: "M0 4l4-4 4 4H6L4 2.500 2 4z" },
    downSmall: { w: 8, h: 4, d: "M0 0l4 4 4-4H6L4 1.500 2 0z" },
  };
  const s = shapes[name];
  return (
    <svg width={s.w} height={s.h} viewBox={`0 0 ${s.w} ${s.h}`} fill="currentColor" aria-hidden="true">
      <path d={s.d} />
    </svg>
  );
}

function FlScrollbar({ label, before, thumb }: { label: string; before: string; thumb: string }) {
  return (
    <div className="flex w-[15px] shrink-0 flex-col bg-[#959595] text-black" role="group" aria-label={label}>
      <button type="button" aria-label="Scroll up" className={`${flButton} h-[15px] shrink-0`}>
        <Glyph name="upSmall" />
      </button>
      <div className={before} />
      <div className={`${thumb} flex items-center justify-center rounded-[2px] border border-[#686868] bg-linear-to-r from-[#d4d4d4] to-[#b8b8b8]`}>
        <svg width="9" height="20" viewBox="0 0 9 20" stroke="#7d7d7d" aria-hidden="true" className="max-h-full">
          <path d="M0 8l8-8M0 14l8-8M0 20l8-8" />
        </svg>
      </div>
      <div className="flex-1" />
      <button type="button" aria-label="Scroll down" className={`${flButton} h-[15px] shrink-0`}>
        <Glyph name="downSmall" />
      </button>
    </div>
  );
}

function Toggle({ label, on = false, disabled = false, className }: { label: string; on?: boolean; disabled?: boolean; className: string }) {
  return (
    <button type="button" aria-pressed={on} disabled={disabled} className={`${flButton} ${className} !justify-start gap-0.5 pl-[3px] ${disabled ? "border-[#a4a4a4] text-[#8c8c8c]" : ""}`}>
      <span className={`h-[10px] w-[6px] border ${on ? "border-[#009000] bg-[#00f000]" : "border-t-[#7a7a7a] border-r-[#eeeeee] border-b-[#eeeeee] border-l-[#7a7a7a]"}`} />
      {label}
    </button>
  );
}

function DigiMenu() {
  return (
    <nav className="flex h-[22px] text-xs">
      <div className="flex flex-1 items-center rounded-[2px] border border-[#6b6b6b] bg-linear-to-b from-[#e0e0e0] via-[#c6c6c6] to-[#bebebe] pl-[7px]">
        <div className="w-9"><MenuItem label="File" /></div>
        <div className="w-[69px]"><MenuItem label="Op Mode" hot={3} /></div>
        <div className="w-[74px]"><MenuItem label="Configure" /></div>
        <div className="w-11"><MenuItem label="View" /></div>
        <div className="w-[103px]"><MenuItem label="Logbook" /></div>
        <MenuItem label="Help" />
      </div>
      <span className={`${flButton} ml-px w-[74px]`} />
      <Toggle label="Spot" disabled className="ml-px w-[50px]" />
      <Toggle label="RxID" className="w-[50px]" />
      <Toggle label="TxID" className="w-[50px]" />
      <Toggle label="TUNE" className="w-[50px]" />
      <span className={`${flButton} w-[49px]`} />
    </nav>
  );
}

const iconButton = `${flButton} h-6 w-[23px] shrink-0`;

function LogPanel() {
  return (
    <div className="flex h-[77px] pt-px text-xs">
      <div className="flex w-[300px] shrink-0 flex-col">
        <output className="flex h-[48px] items-center justify-end border border-[#8c8c80] bg-[#fffddf] pr-[14px] font-['Liberation_Sans',sans-serif] text-[46px] leading-none">
          14070.000
        </output>
        <div className="flex pt-px">
          <input aria-label="Operating mode" defaultValue="RTTY" className={`${flInput} w-[100px] px-1`} />
          <button type="button" aria-label="Choose mode" className={iconButton}><Glyph name="down" /></button>
          <input aria-label="Bandwidth" disabled className="ml-0.5 h-6 w-[101px] rounded-[2px] border border-[#a2a2a2] bg-[#c4c4c4]" />
          <button type="button" disabled aria-label="Choose bandwidth" className={`${iconButton} border-[#a2a2a2] text-[#7c7c7c]`}><Glyph name="down" /></button>
          <button type="button" aria-label="Sync" className={`${iconButton} ml-0.5`}>
            <svg width="17" height="17" viewBox="0 0 17 17" fill="#8fb4e4" stroke="#24508e" strokeWidth="0.900">
              <path d="M1 8C1 3 6 0 11 2.500L13 .5l1.500 6.500-6.500-.5 2-2C7 3 4 4.500 3.800 8z" />
              <path d="M16 9c0 5-5 8-10 5.500L4 16.500 2.500 10l6.500.5-2 2c3 1.500 6 0 6.200-3.500z" />
            </svg>
          </button>
          <button type="button" aria-label="Logbook" className={`${iconButton} ml-0.5`}>
            <svg width="17" height="17" viewBox="0 0 17 17">
              <rect x="1.500" y="1" width="12" height="14.500" rx="1" fill="#a8bede" stroke="#3c5488" />
              <path d="M3 14h11" stroke="#fff" strokeWidth="1.600" />
              <circle cx="8" cy="7" r="2.800" fill="none" stroke="#a03c8c" />
              <circle cx="8" cy="7" r="1" fill="#a03c8c" />
              <path d="M15 2v4" stroke="#d83010" strokeWidth="2" />
              <path d="M15 7v3" stroke="#f0c800" strokeWidth="2" />
              <path d="M15 11v3" stroke="#30a020" strokeWidth="2" />
            </svg>
          </button>
        </div>
      </div>
      <div className="ml-1 flex shrink-0 flex-col gap-px">
        <button type="button" aria-label="Web lookup" className={iconButton}>
          <svg width="16" height="16" viewBox="0 0 16 16">
            <circle cx="8" cy="8" r="7" fill="#8db3e2" stroke="#4c74a8" />
            <path d="M3 4l4-1.500 2 2-2 3-3 1zM9 8l4-1 1 3-4 4-1.500-3z" fill="#eef4fb" />
          </svg>
        </button>
        <button type="button" aria-label="Clear log fields" className={iconButton}><Broom /></button>
        <button type="button" aria-label="Save contact" className={iconButton}>
          <svg width="17" height="17" viewBox="0 0 17 17">
            <rect x="1" y="3" width="15" height="13" rx="1" fill="#f2f2f2" stroke="#7c7c7c" />
            <path d="M3 13.500h11" stroke="#bcbcbc" strokeWidth="2" />
            <path d="M4 1.500c4-1 7 1 7 5h2.500L9 11.500 4.500 6.500H7c0-2.500-1-4-3-5z" fill="#4f82b8" stroke="#244c80" strokeWidth="0.700" />
          </svg>
        </button>
      </div>
      <div className="flex shrink-0 flex-col gap-px">
        <div className="flex items-center">
          <label htmlFor="freq" className="w-[35px] pr-1 text-right">Freq</label>
          <input id="freq" defaultValue="14070.000" className={`${flInput} w-[90px]`} />
          <button type="button" className={`${flButton} h-6 w-[23px]`}>On</button>
          <input aria-label="Time on" className={`${flInput} ml-px w-[39px]`} />
          <label htmlFor="off" className="w-[26px] text-center">Off</label>
          <input id="off" defaultValue="2244" className={`${flInput} w-10`} />
          <label htmlFor="in" className="w-[18px] text-center">In</label>
          <input id="in" defaultValue="599" className={`${flInput} w-9`} />
          <label htmlFor="out" className="w-7 text-center">Out</label>
          <input id="out" defaultValue="599" className={`${flInput} w-9`} />
        </div>
        <div className="flex items-center">
          <label htmlFor="call" className="w-[35px] pr-1 text-right">Call</label>
          <input id="call" className={`${flInput} w-[153px]`} />
          <label htmlFor="op" className="w-[26px] text-center">Op</label>
          <input id="op" className={`${flInput} w-[94px]`} />
          <label htmlFor="az" className="w-7 pr-[3px] text-right">Az</label>
          <input id="az" className={`${flInput} w-9`} />
        </div>
        <div className="flex items-center">
          <label htmlFor="qth" className="w-[35px] pr-1 text-right">Qth</label>
          <input id="qth" className={`${flInput} w-[153px]`} />
          <label htmlFor="st" className="w-[22px] text-center">St</label>
          <input id="st" className={`${flInput} w-[29px]`} />
          <label htmlFor="pr" className="w-[21px] text-center">Pr</label>
          <input id="pr" className={`${flInput} w-[29px]`} />
          <label htmlFor="loc" className="w-4 text-center">L</label>
          <input id="loc" className={`${flInput} w-[67px]`} />
        </div>
      </div>
      <div className="ml-px flex flex-1 flex-col pr-[3px]">
        <div className="flex h-6 items-end gap-0.5" role="tablist">
          <button type="button" role="tab" aria-selected="true" className="h-6 w-[75px] border-t border-r border-l border-t-[#e8e8e8] border-r-[#6b6b6b] border-l-[#e8e8e8] leading-none">Cnty/Cntry</button>
          <button type="button" role="tab" className="h-[22px] w-11 border-t border-r border-l border-t-[#e8e8e8] border-r-[#6b6b6b] border-l-[#e8e8e8] leading-none">Notes</button>
        </div>
        <div className="flex flex-col gap-px border-t border-r border-l border-t-[#e8e8e8] border-r-[#7a7a7a] border-l-[#e8e8e8] pr-px">
          <div className="flex">
            <input aria-label="County" className={`${flInput} flex-1`} />
            <button type="button" aria-label="Choose county" className={`${iconButton} ml-px`}><Glyph name="down" /></button>
          </div>
          <div className="flex">
            <input aria-label="Country" className={`${flInput} flex-1`} />
            <button type="button" aria-label="Choose country" className={`${iconButton} ml-px`}><Glyph name="down" /></button>
          </div>
        </div>
      </div>
    </div>
  );
}

const RX_TEXT = `ZBO
D/;7
GIGEM(AMATEUR-PARTTY) DE KG5LYE K
Z
D/&
7
GIGEM(AMATEUR-PARTTY) DE KG5LYE K
Z
DQSETU
GIGEM(AMATEUR-PARTTY)`;

function SignalBrowser() {
  return (
    <div className="flex w-[260px] shrink-0 flex-col border-r border-[#7a7a7a]">
      <div className="flex h-[396px] border border-[#7a7a7a] bg-white p-px">
        <ul className="flex-1">
          {Array.from({ length: 23 }, (_, i) =>
            i === 13 ? (
              <li key={i} className="flex h-[17px] bg-[#0000ff] text-sm leading-[17px] text-white">
                <span className="w-[86px] text-right">14068.35</span>
                <span className="pl-[6px]">APARTTY)</span>
              </li>
            ) : (
              <li key={i} className="flex h-[17px] pl-[89px]">
                <span className={`flex-1 ${i % 2 === 0 ? "bg-[#e9e9e9]" : ""}`} />
              </li>
            ),
          )}
        </ul>
        <FlScrollbar label="Signal list scroll" before="h-0" thumb="h-[280px]" />
      </div>
      <input aria-label="Search pattern" defaultValue="CQ" className="mt-px h-5 border border-[#7a7a7a] bg-white px-0.5 text-xs leading-none outline-none" />
      <div className="mt-px flex h-5">
        <output className="flex w-[34px] items-center justify-center border border-[#7a7a7a] bg-[#b7d0ee] text-[10px]">-6.0</output>
        <div className="relative ml-px w-[149px] border border-[#7a7a7a] bg-[#b7d0ee]">
          <div className="flex h-full items-center pr-px pl-1">
            <div className="h-[3px] w-full bg-black" />
          </div>
          <input
            type="range"
            aria-label="Squelch level"
            min={-6}
            max={20}
            defaultValue={-6}
            className="absolute inset-0 h-full w-full appearance-none bg-transparent px-px [&::-webkit-slider-thumb]:h-[17px] [&::-webkit-slider-thumb]:w-[13px] [&::-webkit-slider-thumb]:appearance-none [&::-webkit-slider-thumb]:rounded-[4px] [&::-webkit-slider-thumb]:border [&::-webkit-slider-thumb]:border-[#686868] [&::-webkit-slider-thumb]:bg-[linear-gradient(90deg,#cfcfcf_4px,#2c6494_4px,#4682b0_7px,#cfcfcf_7px)]"
          />
        </div>
        <button type="button" className={`${flButton} ml-px flex-1 !justify-start gap-1 pl-1 text-xs`}>
          <Broom />
          Clear
        </button>
      </div>
    </div>
  );
}

const macroBase = "flex h-[23px] min-w-0 flex-1 items-center justify-center gap-[6px] rounded-[2px] border leading-none text-white";
const teal = "border-[#224c4c] bg-linear-to-b from-[#8ab8b8] via-[#509090] to-[#4f9090]";
const maroon = "border-[#5c2828] bg-linear-to-b from-[#b88888] via-[#905050] to-[#905050]";
const indigo = "border-[#28285c] bg-linear-to-b from-[#8888b8] via-[#505090] to-[#505090]";

const MACROS: { tone: string; items: { label: string; glyph?: GlyphName }[] }[] = [
  { tone: teal, items: [{ label: "RsID CQ" }, { label: "ANS", glyph: "skip" }, { label: "QSO", glyph: "ffwd" }, { label: "KN", glyph: "pause" }] },
  { tone: maroon, items: [{ label: "SK", glyph: "pause" }, { label: "Me/Qth" }, { label: "Brag" }, { label: "" }] },
  { tone: indigo, items: [{ label: "T/R" }, { label: "Tx", glyph: "ffwd" }, { label: "Rx", glyph: "pause" }, { label: "TX", glyph: "skip" }] },
];

function MacroBar() {
  return (
    <div className="flex h-6 items-center text-xs">
      <div className="flex flex-1 gap-[3px]">
        {MACROS.map((group, g) => (
          <div key={g} className="flex flex-1 gap-px">
            {group.items.map((item, i) => (
              <button key={i} type="button" aria-label={item.label || "Empty macro"} className={`${macroBase} ${group.tone}`}>
                {item.label}
                {item.glyph && <Glyph name={item.glyph} />}
              </button>
            ))}
          </div>
        ))}
      </div>
      <button type="button" className={`${flButton} ml-px h-[23px] w-[31px]`}>1</button>
    </div>
  );
}

function WaterfallControls() {
  const b = `${flButton} h-[21px]`;
  const field = "h-[21px] min-w-0 rounded-[2px] border border-[#8a8a8a] bg-white text-center leading-none outline-none";
  return (
    <div className="flex pt-[3px] text-xs">
      <button type="button" className={`${b} w-16`}>WF</button>
      <button type="button" aria-label="Lower reference level" className={`${b} ml-0.5 w-5`}><Glyph name="left" /></button>
      <input aria-label="Reference level" defaultValue="0" className={`${field} w-[66px]`} />
      <button type="button" aria-label="Raise reference level" className={`${b} w-[21px]`}><Glyph name="right" /></button>
      <button type="button" aria-label="Lower range" className={`${b} ml-0.5 w-5`}><Glyph name="left" /></button>
      <input aria-label="Range" defaultValue="60" className={`${field} w-[65px]`} />
      <button type="button" aria-label="Raise range" className={`${b} w-[21px]`}><Glyph name="right" /></button>
      <button type="button" className={`${b} ml-0.5 w-[53px]`}>x4</button>
      <button type="button" aria-label="Shift left" className={`${b} ml-0.5 w-[37px]`}><Glyph name="left" /></button>
      <button type="button" aria-label="Center" className={`${b} ml-px w-9`}><Glyph name="stop" /></button>
      <button type="button" aria-label="Shift right" className={`${b} ml-px w-[37px]`}><Glyph name="right" /></button>
      <button type="button" className={`${b} ml-0.5 w-[96px]`}>FAST</button>
      <button type="button" aria-label="Cursor fast down" className={`${b} ml-0.5 w-7`}><Glyph name="left2" /></button>
      <button type="button" aria-label="Cursor down" className={`${b} ml-px w-7`}><Glyph name="left" /></button>
      <input aria-label="Cursor frequency" defaultValue="1647" className={`${field} ml-px w-[81px]`} />
      <button type="button" aria-label="Cursor up" className={`${b} ml-px w-7`}><Glyph name="right" /></button>
      <button type="button" aria-label="Cursor fast up" className={`${b} ml-px w-7`}><Glyph name="right2" /></button>
      <button type="button" disabled className={`${b} ml-0.5 w-[68px] border-[#a4a4a4] text-[#8c8c8c]`}>QSY</button>
      <button type="button" className={`${b} ml-0.5 w-[85px]`}>Store</button>
      <Toggle label="Lk" className="ml-px h-[21px] w-[69px]" />
      <Toggle label="T/R" className="mr-0.5 ml-auto h-[21px] w-[84px]" />
    </div>
  );
}

function StatusBar() {
  const cell = "flex items-center border border-[#8a8a8a] bg-white px-[3px] whitespace-pre";
  const b = `${flButton} h-5`;
  return (
    <div className="flex h-5 text-xs">
      <div className={`${cell} w-[109px]`}>RTTY</div>
      <div className={`${cell} ml-px w-[109px]`}>45.45/170</div>
      <div className={`${cell} ml-px w-[109px]`}>s/n -7  dB</div>
      <div className="ml-[3px] flex flex-1 items-center border border-[#8a8a8a] bg-white pl-[104px] font-['DejaVu_Sans_Mono',monospace] text-[10px] leading-none">
        <span className="flex h-[13px] w-[362px] items-center overflow-visible border-l-2 border-[#008c00] bg-[#00ff00] pl-1 whitespace-nowrap">
          .-120.-110.-100..-90..-80..-70..-60..-50..-40..-30..-20..-10...|
        </span>
        <span className="h-[13px] w-0.5 bg-[#ff0000]" />
      </div>
      <button type="button" aria-label="Squelch fast down" className={`${b} ml-px w-[18px]`}>
        <svg width="11" height="10" viewBox="0 0 11 10"><path d="M5 0v10L0 5zM11 0v10L6 5z" /></svg>
      </button>
      <button type="button" aria-label="Squelch down" className={`${b} w-[18px]`}>
        <svg width="5" height="10" viewBox="0 0 5 10"><path d="M5 0v10L0 5z" /></svg>
      </button>
      <input aria-label="Transmit level" defaultValue="-3.0" className="h-5 w-[47px] rounded-[2px] border border-[#8a8a8a] bg-white text-center leading-none outline-none" />
      <button type="button" aria-label="Squelch up" className={`${b} w-[18px]`}>
        <svg width="5" height="10" viewBox="0 0 5 10"><path d="M0 0v10l5-5z" /></svg>
      </button>
      <button type="button" aria-label="Squelch fast up" className={`${b} w-[18px]`}>
        <svg width="11" height="10" viewBox="0 0 11 10"><path d="M0 0v10l5-5zM6 0v10l5-5z" /></svg>
      </button>
      <svg width="17" height="20" viewBox="0 0 17 20" aria-hidden="true">
        <path d="M8.500 2.500l5 7.500-5 7.500-5-7.500z" fill="#00f000" stroke="#000" />
      </svg>
      <Toggle label="AFC" on className="h-5 w-[59px]" />
      <Toggle label="SQL" on className="ml-px h-5 w-[59px]" />
    </div>
  );
}

function FldigiWindow() {
  return (
    <div className="absolute top-[121px] left-0 flex w-[1191px] flex-col border-r-2 border-b-2 border-l-[3px] border-[#073642] bg-[#c0c0c0] font-['DejaVu_Sans',sans-serif] text-black">
      <div className="h-[18px] bg-[#073642] font-['DejaVu_Sans_Mono',monospace] text-xs leading-[18px] text-[#839496]">
        fldigi ver4.1.17 - KG5LYE
      </div>
      <DigiMenu />
      <LogPanel />
      <div className="flex h-[438px]">
        <SignalBrowser />
        <div className="flex min-w-0 flex-1 flex-col">
          <div className="flex h-[224px] border border-[#8c8468] bg-[#fff0bf] pr-px">
            <textarea
              readOnly
              aria-label="Received text"
              value={RX_TEXT}
              className="flex-1 resize-none overflow-hidden bg-transparent pt-[11px] pl-[3px] text-base leading-[19px] outline-none"
            />
            <FlScrollbar label="Received text scroll" before="h-[184px]" thumb="h-[8px]" />
          </div>
          <div className="flex flex-1 border border-[#8c9cac] bg-[#c8eaff] pr-px">
            <textarea aria-label="Transmit text" className="flex-1 resize-none bg-transparent outline-none" />
            <FlScrollbar label="Transmit text scroll" before="h-0" thumb="h-[181px]" />
          </div>
        </div>
      </div>
      <MacroBar />
      <div className="flex h-[124px]">
        <div className="flex min-w-0 flex-1 flex-col border-t border-[#8a8a8a]">
          <DigiWaterfall />
          <WaterfallControls />
        </div>
        <div className="ml-px flex w-8 gap-0.5">
          <div className="flex w-[15px] flex-col border border-[#7a7a7a] bg-white pt-0.5">
            <div className="flex-1 bg-[#009000]" />
          </div>
          <div className="flex flex-1 flex-col justify-end rounded-[2px] border border-[#7a7a7a] bg-[#505050] p-0.5">
            <div className="h-[5px] rounded-[2px] bg-[#d4d4d4]" />
          </div>
        </div>
      </div>
      <StatusBar />
    </div>
  );
}

export default function App() {
  return (
    <div className="relative h-screen min-h-[881px] w-full overflow-hidden bg-white">
      <GqrxWindow />
      <FldigiWindow />
    </div>
  );
}
